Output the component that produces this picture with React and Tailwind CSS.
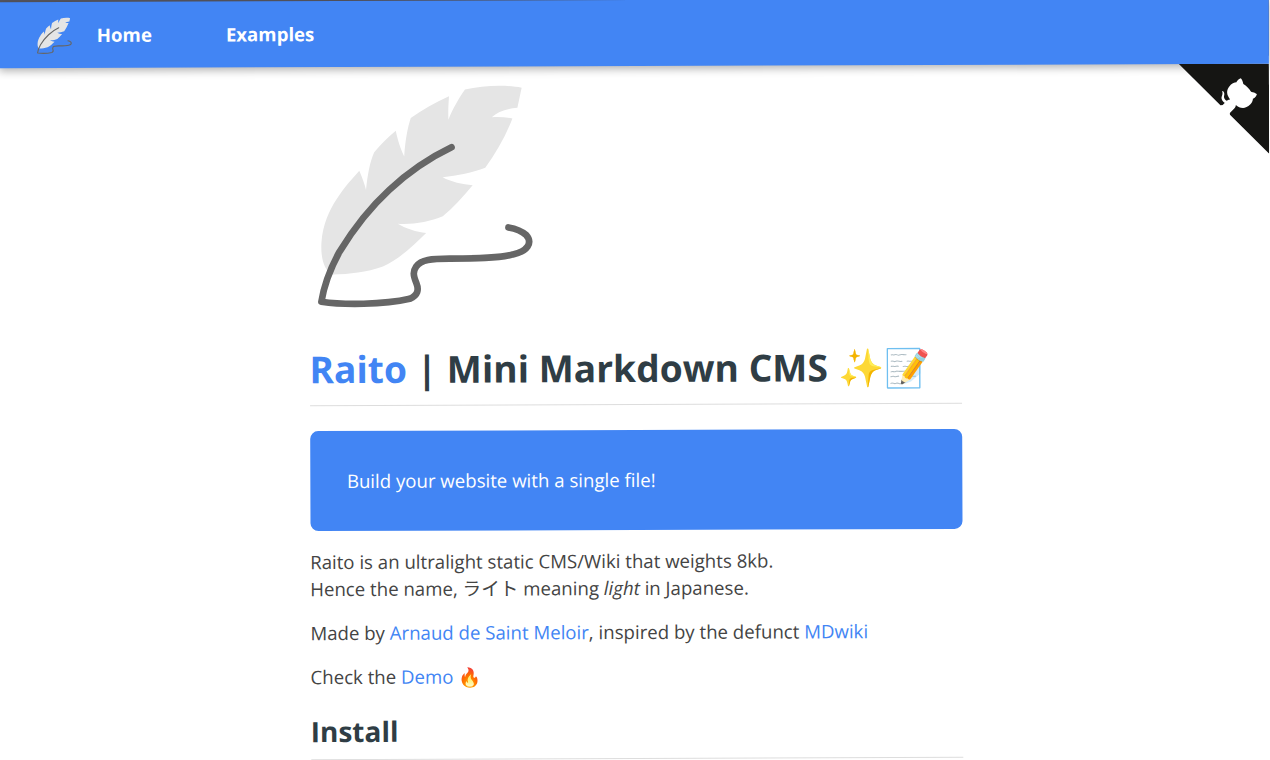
import React from 'react';

const Quill = ({ className }) => (
  <svg viewBox="0 0 750 720" className={className} fill="none">
    <path
      d="M100 598C75 590 62 550 66 500C70 450 90 405 110 375C135 335 160 310 180 287C190 310 197 330 200 345C205 300 212 260 225 232C245 208 270 185 290 168C295 195 305 225 315 245C318 200 325 160 335 130C370 105 410 82 450 65C448 90 447 115 448 135C460 105 480 70 498 45C550 33 620 30 668 40L655 100C620 103 595 113 578 128C600 127 620 128 640 132C620 185 590 235 558 280C520 295 475 303 430 308C455 322 490 330 520 332C490 368 460 400 430 425C390 442 340 450 295 447C320 462 350 472 380 475C340 515 295 555 250 575C200 592 150 598 100 598Z"
      fill="#e5e5e5"
    />
    <path
      d="M457 218C400 245 330 290 270 345C210 400 160 465 120 530C95 575 75 620 65 680C130 690 250 690 330 672C355 662 358 645 350 625C340 600 340 590 350 575C365 555 395 552 450 552C520 552 600 552 640 540C685 530 700 505 680 482C665 468 645 462 627 459"
      stroke="#666"
      strokeWidth="20"
      strokeLinecap="round"
      strokeLinejoin="round"
    />
  </svg>
);

const GithubCorner = () => (
  <svg viewBox="0 0 250 250" className="absolute right-0 top-[66px] h-[90px] w-[90px]" fill="#151513">
    <path d="M0,0 L115,115 L130,115 L142,142 L250,250 L250,0 Z" />
    <path
      d="M128.3,109.0 C113.8,99.7 119.0,89.6 119.0,89.6 C122.0,82.7 120.5,78.6 120.5,78.6 C119.2,72.0 123.4,76.3 123.4,76.3 C127.3,80.9 125.5,87.3 125.5,87.3 C122.9,97.6 130.6,101.9 134.4,103.2"
      fill="#fff"
    />
    <path
      d="M115.0,115.0 C114.9,115.1 118.7,116.5 119.8,115.4 L133.7,101.6 C136.9,99.2 139.9,98.4 142.2,98.6 C133.8,88.0 127.5,74.4 143.8,58.0 C148.5,53.4 154.0,51.2 159.7,51.0 C160.3,49.4 163.2,43.6 171.4,40.1 C171.4,40.1 176.1,42.5 178.8,56.2 C183.1,58.6 187.2,61.8 190.9,65.4 C194.5,69.0 197.7,73.2 200.1,77.6 C213.8,80.2 216.3,84.9 216.3,84.9 C212.7,93.1 206.9,96.0 205.4,96.6 C205.1,102.4 203.0,107.8 198.3,112.5 C181.9,128.9 168.3,122.5 157.7,114.1 C157.9,116.9 156.7,120.9 152.7,124.9 L141.0,136.5 C139.8,137.7 141.6,141.9 141.8,141.8 Z"
      fill="#fff"
    />
  </svg>
);

const Link = ({ children }) => <a href="#" className="text-[#4285f4]">{children}</a>;

export default function App() {
  return (
    <div className="h-screen overflow-hidden bg-white" style={{ fontFamily: '"Open Sans", "Noto Sans CJK JP", sans-serif' }}>
      <div className="relative min-h-[900px] origin-[635px_380px] rotate-[-0.2deg] text-[18.64px] text-[#444]">
        <nav className="flex h-[66px] items-center bg-[#4285f4] pl-[35px] shadow-[0_3px_8px_rgba(0,0,0,0.3),0_-8px_0_#55555f]">
          <Quill className="h-[39px] w-[41px]" />
          <a href="#" className="ml-[22px] font-bold text-white">Home</a>
          <a href="#" className="ml-[74px] font-bold text-white">Examples</a>
        </nav>
        <GithubCorner />
        <main className="ml-[309.5px] w-[652px] pt-[9px]">
          <Quill className="-ml-[9.5px] -mt-[1px] h-[240px] w-[250px]" />
          <h1 className="mt-[28px] border-b border-[#ddd] pb-[11px] text-[37.2px] leading-[51px] font-bold text-[#2f3d45]">
            <span className="text-[#4285f4]">Raito</span> | Mini Markdown CMS ✨📝
          </h1>
          <div className="mt-[25px] flex h-[100px] items-center rounded-[8px] bg-[#4285f4] px-[37px] text-white">
            Build your website with a single file!
          </div>
          <p className="mt-[17px] leading-[27px]">
            Raito is an ultralight static CMS/Wiki that weights 8kb.<br />
            Hence the name, ライト meaning <em>light</em> in Japanese.
          </p>
          <p className="mt-[17px] leading-[27px]">
            Made by <Link>Arnaud de Saint Meloir</Link>, inspired by the defunct <Link>MDwiki</Link>
          </p>
          <p className="mt-[17px] leading-[27px]">
            Check the <Link>Demo</Link> 🔥
          </p>
          <h2 className="mt-[22px] border-b border-[#ddd] pb-[9px] text-[28px] leading-[38px] font-bold text-[#2f3d45]">Install</h2>
        </main>
      </div>
    </div>
  );
}
